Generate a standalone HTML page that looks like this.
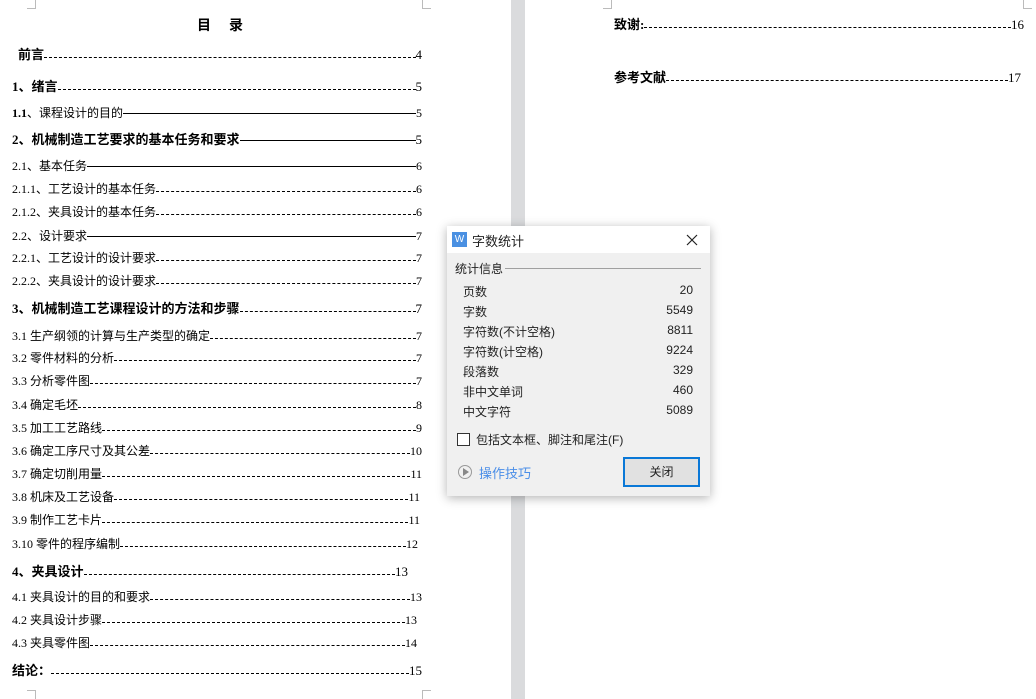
<!DOCTYPE html>
<html><head><meta charset="utf-8"><style>
*{margin:0;padding:0;box-sizing:border-box}
body{width:1036px;height:699px;overflow:hidden;background:#fff;position:relative;font-family:"Liberation Serif","Noto Sans CJK SC",sans-serif;color:#000}
.gap{position:absolute;left:511px;top:0;width:14px;height:699px;background:#dadbdd}
.r{position:absolute;display:flex;align-items:flex-end;font-size:12px;line-height:14px;height:14px;white-space:nowrap}
.r .f{flex:1;border-bottom:1px dashed #000;margin-bottom:4px;height:1px}
.r .s{flex:1;border-bottom:1px solid #000;margin-bottom:6px;height:1px}
.b{font-size:13px}
.b>span:first-child{font-weight:bold}
.cm{position:absolute;border-color:#bbb;border-style:solid;width:9px;height:9px}
.dlg{position:absolute;left:447px;top:226px;width:263px;height:270px;background:#f0f0f0;box-shadow:0 2px 10px rgba(0,0,0,.3);font-family:"Liberation Sans","Noto Sans CJK SC",sans-serif;font-size:12px;color:#222}
.tb{height:27px;background:#fff;position:relative}
.st{position:absolute;left:16px;width:230px;display:flex;justify-content:space-between;font-size:12px}
</style></head><body>
<div class="gap"></div>
<div class="cm" style="left:422px;top:0;border-width:0 0 1px 1px"></div>
<div class="cm" style="left:27px;top:0;border-width:0 1px 1px 0"></div>
<div class="cm" style="left:603px;top:0;border-width:0 1px 1px 0"></div>
<div class="cm" style="left:1023px;top:0;border-width:0 0 1px 1px"></div>
<div class="cm" style="left:422px;top:690px;border-width:1px 0 0 1px"></div>
<div class="cm" style="left:27px;top:690px;border-width:1px 1px 0 0"></div>
<div style="position:absolute;left:197px;top:15px;font-size:14px;font-weight:bold;letter-spacing:18px">目录</div>

<div class="r b" style="left:18px;top:48px;width:404px"><span>前言</span><span class="f"></span><span>4</span></div>
<div class="r b" style="left:12px;top:80px;width:410px"><span>1、绪言</span><span class="f"></span><span>5</span></div>
<div class="r" style="left:12px;top:106px;width:410px"><span><b>1.1</b>、课程设计的目的</span><span class="s"></span><span>5</span></div>
<div class="r b" style="left:12px;top:133px;width:410px"><span>2、机械制造工艺要求的基本任务和要求</span><span class="s"></span><span>5</span></div>
<div class="r" style="left:12px;top:159px;width:410px"><span>2.1、基本任务</span><span class="s"></span><span>6</span></div>
<div class="r" style="left:12px;top:182px;width:410px"><span>2.1.1、工艺设计的基本任务</span><span class="f"></span><span>6</span></div>
<div class="r" style="left:12px;top:205px;width:410px"><span>2.1.2、夹具设计的基本任务</span><span class="f"></span><span>6</span></div>
<div class="r" style="left:12px;top:229px;width:410px"><span>2.2、设计要求</span><span class="s"></span><span>7</span></div>
<div class="r" style="left:12px;top:251px;width:410px"><span>2.2.1、工艺设计的设计要求</span><span class="f"></span><span>7</span></div>
<div class="r" style="left:12px;top:274px;width:410px"><span>2.2.2、夹具设计的设计要求</span><span class="f"></span><span>7</span></div>
<div class="r b" style="left:12px;top:302px;width:410px"><span>3、机械制造工艺课程设计的方法和步骤</span><span class="f"></span><span>7</span></div>
<div class="r" style="left:12px;top:329px;width:410px"><span>3.1 生产纲领的计算与生产类型的确定</span><span class="f"></span><span>7</span></div>
<div class="r" style="left:12px;top:351px;width:410px"><span>3.2 零件材料的分析</span><span class="f"></span><span>7</span></div>
<div class="r" style="left:12px;top:374px;width:410px"><span>3.3  分析零件图</span><span class="f"></span><span>7</span></div>
<div class="r" style="left:12px;top:398px;width:410px"><span>3.4 确定毛坯</span><span class="f"></span><span>8</span></div>
<div class="r" style="left:12px;top:421px;width:410px"><span>3.5 加工工艺路线</span><span class="f"></span><span>9</span></div>
<div class="r" style="left:12px;top:444px;width:410px"><span>3.6 确定工序尺寸及其公差</span><span class="f"></span><span>10</span></div>
<div class="r" style="left:12px;top:467px;width:410px"><span>3.7 确定切削用量</span><span class="f"></span><span>11</span></div>
<div class="r" style="left:12px;top:490px;width:408px"><span>3.8 机床及工艺设备</span><span class="f"></span><span>11</span></div>
<div class="r" style="left:12px;top:513px;width:408px"><span>3.9 制作工艺卡片</span><span class="f"></span><span>11</span></div>
<div class="r" style="left:12px;top:537px;width:406px"><span>3.10 零件的程序编制</span><span class="f"></span><span>12</span></div>
<div class="r b" style="left:12px;top:565px;width:396px"><span>4、夹具设计</span><span class="f"></span><span>13</span></div>
<div class="r" style="left:12px;top:590px;width:410px"><span>4.1 夹具设计的目的和要求</span><span class="f"></span><span>13</span></div>
<div class="r" style="left:12px;top:613px;width:405px"><span>4.2 夹具设计步骤</span><span class="f"></span><span>13</span></div>
<div class="r" style="left:12px;top:636px;width:405px"><span>4.3 夹具零件图</span><span class="f"></span><span>14</span></div>
<div class="r b" style="left:12px;top:664px;width:410px"><span>结论：</span><span class="f"></span><span>15</span></div>

<div class="r b" style="left:614px;top:18px;width:410px"><span>致谢: </span><span class="f"></span><span>16</span></div>
<div class="r b" style="left:614px;top:71px;width:407px"><span>参考文献</span><span class="f"></span><span>17</span></div>

<div class="dlg">
 <div class="tb">
  <div style="position:absolute;left:5px;top:6px;width:15px;height:15px;background:#4a90e2;color:#fff;font-size:10px;line-height:15px;text-align:center">W</div>
  <div style="position:absolute;left:25px;top:5px;font-size:13px">字数统计</div>
  <svg style="position:absolute;left:239px;top:8px" width="12" height="12" viewBox="0 0 12 12"><path d="M1 1L11 11M11 1L1 11" stroke="#222" stroke-width="1.2"/></svg>
 </div>
 <div style="position:absolute;left:8px;top:34px;font-size:12px">统计信息</div>
 <div style="position:absolute;left:58px;top:42px;width:196px;border-top:1px solid #a0a0a0"></div>
 <div class="st" style="top:57px"><span>页数</span><span>20</span></div>
 <div class="st" style="top:77px"><span>字数</span><span>5549</span></div>
 <div class="st" style="top:97px"><span>字符数(不计空格)</span><span>8811</span></div>
 <div class="st" style="top:117px"><span>字符数(计空格)</span><span>9224</span></div>
 <div class="st" style="top:137px"><span>段落数</span><span>329</span></div>
 <div class="st" style="top:157px"><span>非中文单词</span><span>460</span></div>
 <div class="st" style="top:177px"><span>中文字符</span><span>5089</span></div>
 <div style="position:absolute;left:10px;top:207px;width:13px;height:13px;border:1px solid #333;background:#fff"></div>
 <div style="position:absolute;left:29px;top:205px">包括文本框、脚注和尾注(F)</div>
 <div style="position:absolute;left:11px;top:239px;width:14px;height:14px;border:1px solid #999;border-radius:50%"></div>
 <div style="position:absolute;left:16px;top:242px;width:0;height:0;border-left:6px solid #888;border-top:4px solid transparent;border-bottom:4px solid transparent"></div>
 <div style="position:absolute;left:32px;top:237px;color:#4a8ee8;font-size:13px">操作技巧</div>
 <div style="position:absolute;left:176px;top:231px;width:77px;height:30px;border:2px solid #0a78d7;background:#e1e1e1;text-align:center;line-height:26px;font-size:12px">关闭</div>
</div>
</body></html>
